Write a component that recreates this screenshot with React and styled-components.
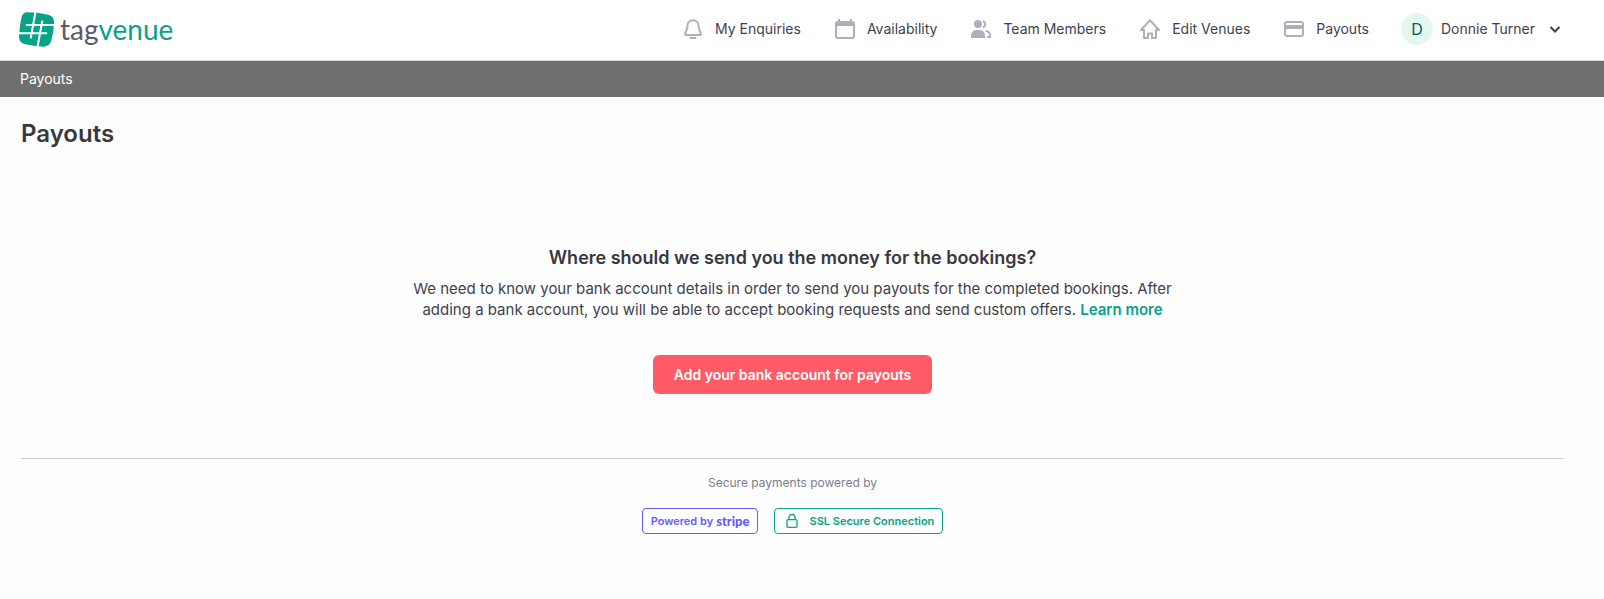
import React from 'react'
import styled, { createGlobalStyle } from 'styled-components'

const colors = {
  white: '#fff',
  page: '#fefefe',
  text: '#3f3f4d',
  heading: '#38383f',
  muted: '#7d7d8c',
  icon: '#aeaebc',
  border: '#d8d8d8',
  rule: '#cbcbd0',
  bar: '#6f6f6f',
  green: '#06a388',
  mint: '#e4f6f2',
  darkGreen: '#0b5c55',
  coral: '#ff5a65',
  purple: '#635bff',
}

const GlobalStyle = createGlobalStyle`
  *, *::before, *::after {
    box-sizing: border-box;
  }

  body {
    margin: 0;
    background: ${colors.page};
    color: ${colors.text};
    font-family: Inter, 'Liberation Sans', sans-serif;
    font-size: 14px;
    line-height: 20px;
  }

  a {
    color: inherit;
    text-decoration: none;
  }

  h1, h2, p {
    margin: 0;
  }
`

const Header = styled.header`
  display: flex;
  align-items: center;
  justify-content: space-between;
  height: 61px;
  padding: 0 37px 2px 19px;
  background: ${colors.white};
  border-bottom: 1px solid ${colors.border};
`

const LogoLink = styled.a`
  display: flex;
  align-items: center;
  gap: 6px;
`

const Wordmark = styled.span`
  font-family: Lato, sans-serif;
  font-size: 28px;
  line-height: 36px;
  color: #5a5a68;
`

const WordmarkAccent = styled.span`
  color: ${colors.green};
`

const Nav = styled.nav`
  display: flex;
  align-items: center;
  gap: 32px;
`

const NavLink = styled.a`
  display: flex;
  align-items: center;
  gap: 10px;
  white-space: nowrap;
`

const NavIcon = styled.svg`
  width: 24px;
  height: 24px;
  color: ${colors.icon};
`

const UserButton = styled.button`
  display: flex;
  align-items: center;
  gap: 8px;
  padding: 0;
  border: 0;
  background: none;
  color: inherit;
  font: inherit;
  white-space: nowrap;
  cursor: pointer;
`

const Avatar = styled.span`
  display: flex;
  align-items: center;
  justify-content: center;
  width: 32px;
  height: 32px;
  border-radius: 50%;
  background: ${colors.mint};
  color: ${colors.darkGreen};
  font-size: 16px;
`

const Chevron = styled.svg`
  width: 24px;
  height: 24px;
`

const Breadcrumbs = styled.nav`
  padding: 8px 20px;
  background: ${colors.bar};
  color: ${colors.white};
`

const Page = styled.main`
  padding: 21px 40px 64px 21px;
`

const Title = styled.h1`
  font-size: 24px;
  font-weight: 600;
  line-height: 32px;
  color: ${colors.heading};
`

const Intro = styled.section`
  display: flex;
  flex-direction: column;
  align-items: center;
  padding: 96px 0 64px;
  text-align: center;
`

const Subtitle = styled.h2`
  font-size: 18px;
  font-weight: 600;
  line-height: 24px;
  color: ${colors.heading};
`

const Description = styled.p`
  max-width: 780px;
  margin-top: 8px;
  font-size: 15px;
  line-height: 21px;
`

const LearnMore = styled.a`
  color: ${colors.green};
  font-weight: 600;
`

const PrimaryButton = styled.button`
  margin-top: 35px;
  height: 39px;
  padding: 0 21px;
  border: 0;
  border-radius: 6px;
  background: ${colors.coral};
  color: ${colors.white};
  font: inherit;
  font-weight: 600;
  cursor: pointer;
`

const Secure = styled.footer`
  display: flex;
  flex-direction: column;
  align-items: center;
  gap: 17px;
  padding-top: 16px;
  border-top: 1px solid ${colors.rule};
`

const SecureLabel = styled.p`
  font-size: 12px;
  line-height: 16px;
  color: ${colors.muted};
`

const Badges = styled.div`
  display: flex;
  gap: 16px;
`

const Badge = styled.div`
  display: flex;
  align-items: center;
  gap: ${props => props.$gap}px;
  height: 26px;
  padding: 0 8px;
  border: 1px solid currentColor;
  border-radius: 4px;
  color: ${props => props.$color};
  font-size: 11px;
  font-weight: 600;
  line-height: 16px;
`

const StripeName = styled.span`
  font-family: Lato, sans-serif;
  font-size: 13px;
  font-weight: 900;
`

const LockIcon = styled.svg`
  width: 18px;
  height: 18px;
`

const LogoMark = () => (
  <svg width="35" height="35" viewBox="0 0 102 102" aria-hidden="true">
    <path
      fill={colors.green}
      d="M22 1Q55 1 85 8Q103 12 102 32Q101 60 94 84Q90 100 72 101Q48 101 18 94Q-1 90 0 70Q2 40 7 17Q10 3 22 1Z"
    />
    <path
      fill="none"
      stroke={colors.white}
      strokeWidth="6"
      d="M48 0L34 77M68 25L54 102M20 38H102M0 62H82"
    />
  </svg>
)

const icons = {
  bell: (
    <path
      fill="none"
      stroke="currentColor"
      strokeWidth="2"
      strokeLinejoin="round"
      strokeLinecap="round"
      d="M12 3.2C8.7 3.2 6.4 5.7 6.4 9C6.4 13.5 4 15.6 4 17.6C4 18 4.2 18 4.6 18H19.4C19.8 18 20 18 20 17.6C20 15.6 17.6 13.5 17.6 9C17.6 5.7 15.3 3.2 12 3.2ZM9.5 21H14.5"
    />
  ),
  calendar: (
    <path
      fill="currentColor"
      fillRule="evenodd"
      d="M5 2h2v2h10V2h2v2a3 3 0 0 1 3 3v12a3 3 0 0 1-3 3H5a3 3 0 0 1-3-3V7a3 3 0 0 1 3-3zM4 9v10a1 1 0 0 0 1 1h14a1 1 0 0 0 1-1V9z"
    />
  ),
  team: (
    <path
      fill="currentColor"
      d="M9 3a4 4 0 1 1 0 8a4 4 0 0 1 0-8zM2 21v-2.500a5.500 5.500 0 0 1 5.500-5.500h3a5.500 5.500 0 0 1 5.500 5.500V21zM14 3a4.500 4.500 0 0 1 0 8.500v-2.200a2.500 2.500 0 0 0 0-4.100zM16.500 13a5.500 5.500 0 0 1 5.500 5.500V21h-4v-2h2v-.500a3.500 3.500 0 0 0-3.500-3.500z"
    />
  ),
  home: (
    <path
      fill="none"
      stroke="currentColor"
      strokeWidth="2"
      strokeLinejoin="round"
      d="M12 3.300L3 13H6V21H10V16.500H14V21H18V13H21Z"
    />
  ),
  card: (
    <path
      fill="currentColor"
      fillRule="evenodd"
      d="M5 4h14a3 3 0 0 1 3 3v10a3 3 0 0 1-3 3H5a3 3 0 0 1-3-3V7a3 3 0 0 1 3-3zM4 6.500V8h16V6.500a.7.7 0 0 0-.7-.5H4.700a.7.7 0 0 0-.7.500zM4 12v5a1 1 0 0 0 1 1h14a1 1 0 0 0 1-1v-5z"
    />
  ),
}

const links = [
  { icon: 'bell', label: 'My Enquiries' },
  { icon: 'calendar', label: 'Availability' },
  { icon: 'team', label: 'Team Members' },
  { icon: 'home', label: 'Edit Venues' },
  { icon: 'card', label: 'Payouts' },
]

const App = () => (
  <>
    <GlobalStyle />
    <Header>
      <LogoLink href="#">
        <LogoMark />
        <Wordmark>
          tag<WordmarkAccent>venue</WordmarkAccent>
        </Wordmark>
      </LogoLink>
      <Nav aria-label="Main">
        {links.map(({ icon, label }) => (
          <NavLink key={icon} href="#">
            <NavIcon viewBox="0 0 24 24" aria-hidden="true">
              {icons[icon]}
            </NavIcon>
            {label}
          </NavLink>
        ))}
        <UserButton type="button" aria-haspopup="menu">
          <Avatar>D</Avatar>
          Donnie Turner
          <Chevron viewBox="0 0 24 24" aria-hidden="true">
            <path
              fill="none"
              stroke="currentColor"
              strokeWidth="2"
              d="M7.500 10L12 14.500L16.500 10"
            />
          </Chevron>
        </UserButton>
      </Nav>
    </Header>
    <Breadcrumbs aria-label="Breadcrumb">
      <a href="#">Payouts</a>
    </Breadcrumbs>
    <Page>
      <Title>Payouts</Title>
      <Intro>
        <Subtitle>Where should we send you the money for the bookings?</Subtitle>
        <Description>
          We need to know your bank account details in order to send you payouts
          for the completed bookings. After adding a bank account, you will be
          able to accept booking requests and send custom offers.{' '}
          <LearnMore href="#">Learn more</LearnMore>
        </Description>
        <PrimaryButton type="button">
          Add your bank account for payouts
        </PrimaryButton>
      </Intro>
      <Secure>
        <SecureLabel>Secure payments powered by</SecureLabel>
        <Badges>
          <Badge $color={colors.purple} $gap={3}>
            Powered by <StripeName>stripe</StripeName>
          </Badge>
          <Badge $color={colors.green} $gap={8}>
            <LockIcon viewBox="0 0 18 18" aria-hidden="true">
              <path
                fill="none"
                stroke="currentColor"
                strokeWidth="1.3"
                d="M5 7.600H13Q14 7.600 14 8.600V14Q14 15.300 12.700 15.300H5.300Q4 15.300 4 14V8.600Q4 7.600 5 7.600ZM6 7.600V5.500A3 3 0 0 1 12 5.500V7.600"
              />
            </LockIcon>
            SSL Secure Connection
          </Badge>
        </Badges>
      </Secure>
    </Page>
  </>
)

export default App
